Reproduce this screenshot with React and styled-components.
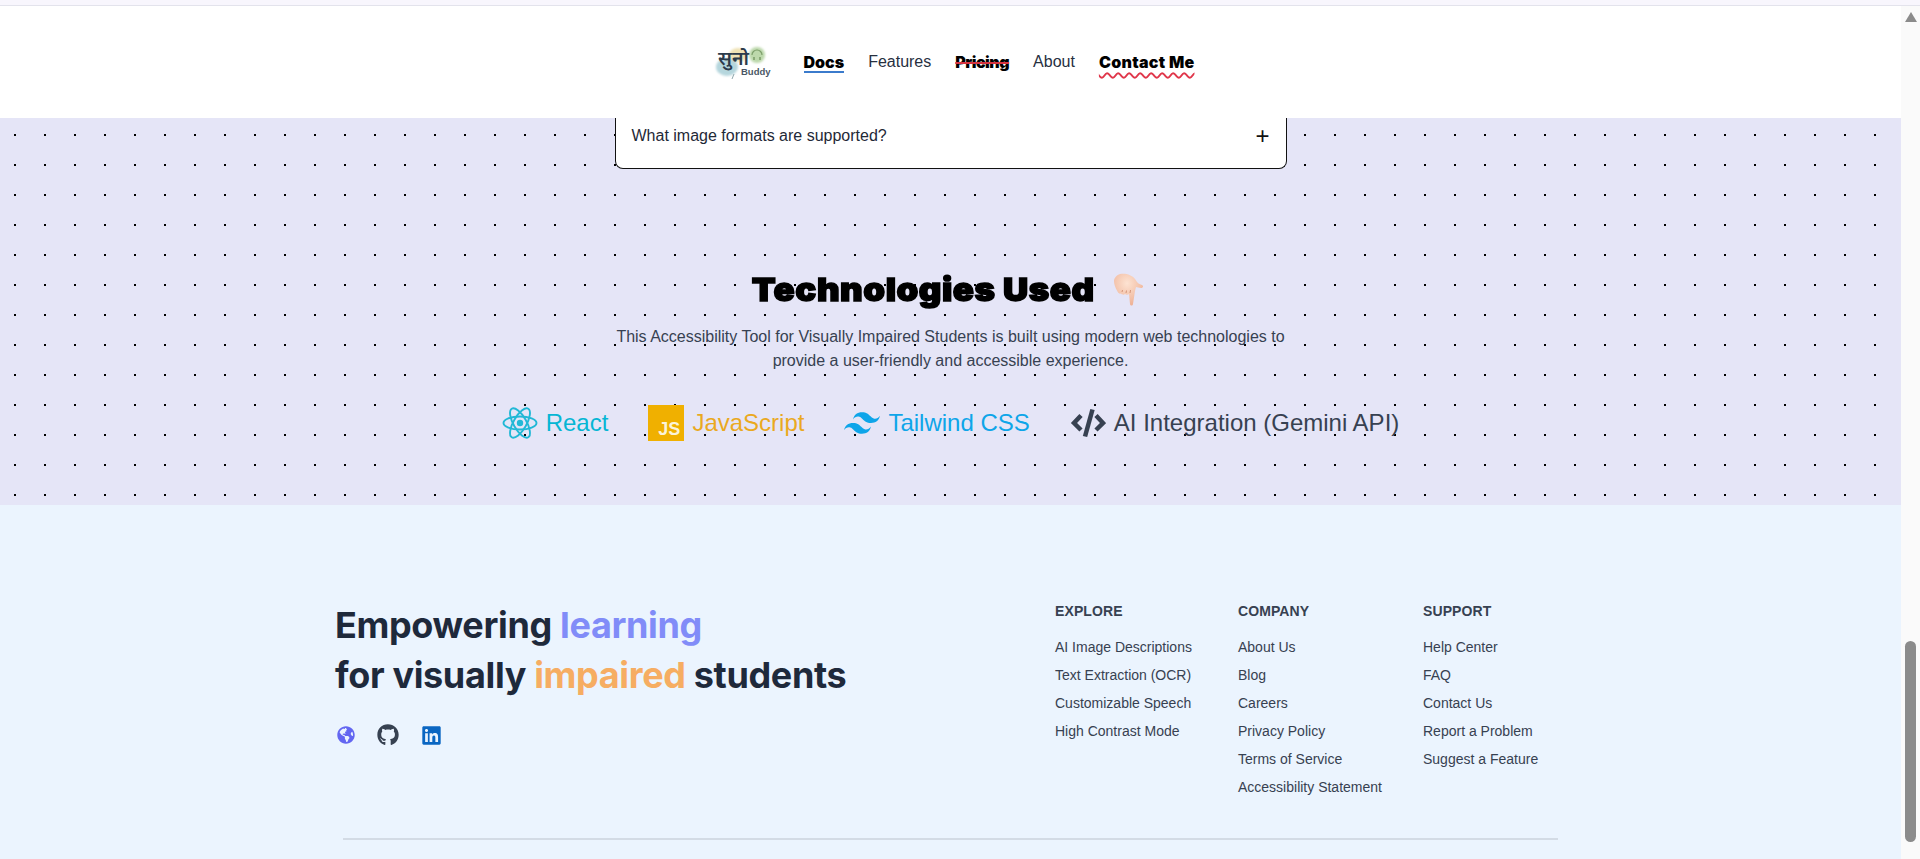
import React from "react";
import styled, { createGlobalStyle } from "styled-components";
import { FaGithub, FaGlobeAmericas, FaLinkedin } from "react-icons/fa";
import { SiTailwindcss } from "react-icons/si";

const Global = createGlobalStyle`
  html, body { margin: 0; padding: 0; height: 100%; overflow: hidden; background: #fff; }
  body { font-family: "Liberation Sans", Arial, sans-serif; color: #1f2937; }
  * { box-sizing: border-box; }
`;

const Page = styled.div`
  height: 859px;
  display: flex;
  flex-direction: column;
  overflow: hidden;
`;
const TopStrip = styled.div`
  height: 6px;
  flex: none;
  background: #f8f6fd;
  border-bottom: 1px solid #e3e3ec;
`;
const Viewport = styled.div`
  flex: 1;
  display: flex;
  min-height: 0;
`;
const Main = styled.main`
  flex: 1;
  min-width: 0;
  display: flex;
  flex-direction: column;
`;
const ScrollTrack = styled.div`
  width: 19px;
  flex: none;
  background: #fafafa;
  display: flex;
  flex-direction: column;
  padding: 6px 4px 0;
`;
const ScrollArrow = styled.div`
  width: 0;
  height: 0;
  border-left: 6px solid transparent;
  border-right: 6px solid transparent;
  border-bottom: 10px solid #8b8b8b;
`;
const ScrollThumb = styled.div`
  width: 11px;
  height: 201px;
  margin-top: 619px;
  border-radius: 6px;
  background: #8b8b8b;
`;

const Nav = styled.nav`
  height: 112px;
  flex: none;
  background: #fff;
  display: flex;
  align-items: center;
  justify-content: center;
`;
const Logo = styled.svg`
  width: 64px;
  height: 64px;
  margin-right: 33px;
  flex: none;
`;
const NavLinks = styled.div`
  display: flex;
  align-items: center;
  gap: 24px;
`;
const NavLink = styled.a`
  font-size: 16px;
  line-height: 24px;
  color: #27303f;
  font-family: ${(p) => (p.$bold ? '"Inter", sans-serif' : '"Liberation Sans", sans-serif')};
  font-weight: ${(p) => (p.$bold ? 900 : 400)};
  ${(p) => p.$bold && "color: #000;"}
  ${(p) => p.$docs && "background: linear-gradient(#3b7bcc, #3b7bcc) 0 21px / 100% 2px no-repeat;"}
  ${(p) => p.$strike && "text-decoration: line-through; text-decoration-color: #d6333f; text-decoration-thickness: 1.5px; letter-spacing: -0.5px;"}
  ${(p) => p.$wavy && "text-decoration: underline wavy #e0364a; text-decoration-thickness: 1.5px; text-underline-offset: 4px; letter-spacing: 0.3px;"}
`;

const TechSection = styled.section`
  height: 387px;
  flex: none;
  background-color: #e5e5f7;
  background-image: radial-gradient(circle at 15px 15px, #000 1.1px, transparent 1.2px);
  background-size: 30px 30px;
  background-position: 0 -118px;
  display: flex;
  flex-direction: column;
  align-items: center;
`;
const FaqCard = styled.div`
  width: 672px;
  height: 51px;
  flex: none;
  background: #fff;
  border: 1px solid #111;
  border-top: none;
  border-radius: 0 0 8px 8px;
  display: flex;
  align-items: center;
  justify-content: space-between;
  padding: 0 16px 14px 16px;
  font-size: 16px;
  color: #1f2937;
`;
const Plus = styled.span`
  font-size: 24px;
  line-height: 22px;
  color: #111;
`;
const TechTitleRow = styled.div`
  display: flex;
  align-items: center;
  gap: 19px;
  margin-top: 99px;
  height: 44px;
`;
const TechTitle = styled.h2`
  margin: 0 14px;
  font-family: "Inter", sans-serif;
  font-weight: 900;
  font-size: 32px;
  line-height: 44px;
  color: #000;
  -webkit-text-stroke: 1.5px #000;
  letter-spacing: 0.5px;
  white-space: nowrap;
  transform: scaleX(1.09);
`;
const Hand = styled.svg`
  width: 30px;
  height: 34px;
  margin-right: 5px;
  flex: none;
`;
const TechText = styled.p`
  margin: 13px 0 0;
  width: 680px;
  text-align: center;
  font-size: 16px;
  line-height: 24px;
  color: #374151;
`;
const TechRow = styled.div`
  display: flex;
  align-items: center;
  gap: 40px;
  margin-top: 32px;
`;
const TechItem = styled.div`
  display: flex;
  align-items: center;
  gap: ${(p) => p.$gap || 10}px;
  font-size: 24px;
  line-height: 36px;
  color: ${(p) => p.$color};
`;
const TechIcon = styled.svg`
  width: 36px;
  height: 36px;
  flex: none;
`;
const JsBox = styled.span`
  width: 36px;
  height: 36px;
  background: #f0b000;
  color: #fbf3d9;
  font-size: 18px;
  font-weight: 700;
  display: flex;
  align-items: flex-end;
  justify-content: flex-end;
  padding: 0 4px 0 0;
  line-height: 23px;
`;

const Footer = styled.footer`
  flex: 1;
  background: #ebf4fe;
  padding: 0 335px;
`;
const FooterTop = styled.div`
  display: flex;
  justify-content: space-between;
  padding-top: 96px;
  height: 333px;
`;
const Brand = styled.div`
  display: flex;
  flex-direction: column;
  margin-top: -1px;
`;
const BrandTitle = styled.h3`
  margin: 0;
  font-family: "Inter", sans-serif;
  font-weight: 700;
  font-size: 36px;
  line-height: 50px;
  letter-spacing: -0.35px;
  color: #1e293b;
`;
const Accent = styled.span`
  color: ${(p) => p.$color};
`;
const Socials = styled.div`
  display: flex;
  align-items: center;
  gap: 22px;
  margin-top: 24px;
  padding-left: 2px;
`;
const Columns = styled.div`
  display: grid;
  grid-template-columns: 183px 185px 143px;
`;
const Column = styled.div`
  display: flex;
  flex-direction: column;
`;
const ColumnTitle = styled.h4`
  margin: 0 0 12px;
  font-size: 14px;
  line-height: 20px;
  font-weight: 700;
  letter-spacing: 0.1px;
  color: #374151;
`;
const ColumnLink = styled.a`
  font-size: 14px;
  line-height: 28px;
  color: #374151;
  white-space: nowrap;
`;
const Rule = styled.hr`
  margin: 0 8px;
  border: none;
  height: 2px;
  background: #d3dbe5;
`;

const columns = [
  ["EXPLORE", ["AI Image Descriptions", "Text Extraction (OCR)", "Customizable Speech", "High Contrast Mode"]],
  ["COMPANY", ["About Us", "Blog", "Careers", "Privacy Policy", "Terms of Service", "Accessibility Statement"]],
  ["SUPPORT", ["Help Center", "FAQ", "Contact Us", "Report a Problem", "Suggest a Feature"]],
];

export default function App() {
  return (
    <Page>
      <Global />
      <TopStrip />
      <Viewport>
        <Main>
          <Nav>
            <Logo viewBox="0 0 64 64" aria-label="Suno Buddy logo">
              <defs>
                <filter id="soft"><feGaussianBlur stdDeviation="0.8" /></filter>
              </defs>
              <g filter="url(#soft)">
                <ellipse cx="31" cy="25" rx="9" ry="7" fill="#efe2b4" />
                <circle cx="50" cy="25" r="8" fill="#bcd8ab" />
                <ellipse cx="20" cy="37" rx="11" ry="9" fill="#b5d6dd" />
              </g>
              <path d="M45 25a5 5 0 0 1 10 0" fill="none" stroke="#7d9f6b" strokeWidth="1.2" />
              <path d="M47 30v-3M53 30v-3" stroke="#7d9f6b" strokeWidth="1.6" />
              <path d="M27 44l-2 5" stroke="#8fa7ad" strokeWidth="1" />
              <text x="11" y="35" fontSize="19.500" fontWeight="600" fill="#2c3b4b" fontFamily="'Noto Sans', 'Liberation Sans', sans-serif">सुनो</text>
              <text x="34" y="45" fontSize="9.500" fontWeight="700" fill="#4a5765" fontFamily="'Liberation Sans', sans-serif">Buddy</text>
            </Logo>
            <NavLinks>
              <NavLink $bold $docs>Docs</NavLink>
              <NavLink>Features</NavLink>
              <NavLink $bold $strike>Pricing</NavLink>
              <NavLink>About</NavLink>
              <NavLink $bold $wavy>Contact Me</NavLink>
            </NavLinks>
          </Nav>
          <TechSection>
            <FaqCard>
              <span>What image formats are supported?</span>
              <Plus>+</Plus>
            </FaqCard>
            <TechTitleRow>
              <TechTitle>Technologies Used</TechTitle>
              <Hand viewBox="0 0 30 34">
                <defs>
                  <radialGradient id="skin" cx="45%" cy="30%" r="70%">
                    <stop offset="0%" stopColor="#fde3d2" />
                    <stop offset="100%" stopColor="#eeb195" />
                  </radialGradient>
                </defs>
                <path d="M6 1c6-1 12 1 15 5 2 3 3 5 7 6 2 1 1 3-1 3-2 0-4-1-5-1l-1 4-2 13c-.3 2-2.6 2-3 0l-1-10c-1 1-3 1-4 0-1 1-3 1-4-.5-1.500.5-3-.5-3.500-2C1 14 0 11 0 8c0-3 3-6 6-7z" fill="url(#skin)" />
                <path d="M8 19l.5-2M12 20l.5-2.500M16 20l.5-3" stroke="#d08d70" strokeWidth="0.9" fill="none" />
              </Hand>
            </TechTitleRow>
            <TechText>
              This Accessibility Tool for Visually Impaired Students is built using modern web technologies to provide a user-friendly and accessible experience.
            </TechText>
            <TechRow>
              <TechItem $color="#06b6d4" $gap={8}>
                <TechIcon viewBox="0 0 36 36" fill="none" stroke="#22b8d6" strokeWidth="1.9">
                  <ellipse cx="18" cy="18" rx="16.500" ry="6.500" />
                  <ellipse cx="18" cy="18" rx="16.500" ry="6.500" transform="rotate(60 18 18)" />
                  <ellipse cx="18" cy="18" rx="16.500" ry="6.500" transform="rotate(120 18 18)" />
                  <circle cx="18" cy="18" r="3.200" fill="#22b8d6" stroke="none" />
                </TechIcon>
                React
              </TechItem>
              <TechItem $color="#eaa91f" $gap={8}><JsBox>JS</JsBox>JavaScript</TechItem>
              <TechItem $color="#0ea5e9" $gap={8}><SiTailwindcss size={36} />Tailwind CSS</TechItem>
              <TechItem $color="#374151" $gap={8}>
                <TechIcon viewBox="0 0 36 36" fill="none" stroke="#374151" strokeWidth="4.500" strokeLinejoin="miter">
                  <path d="M11 10.500L4 18l7 7" />
                  <path d="M26 10.500L33 18l-7 7" />
                  <path d="M22.500 4.500L15 31.500" />
                </TechIcon>
                AI Integration (Gemini API)
              </TechItem>
            </TechRow>
          </TechSection>
          <Footer>
            <FooterTop>
              <Brand>
                <BrandTitle>Empowering <Accent $color="#818cf8">learning</Accent></BrandTitle>
                <BrandTitle>for visually <Accent $color="#f6ad62">impaired</Accent> students</BrandTitle>
                <Socials>
                  <FaGlobeAmericas size={18} color="#6366f1" />
                  <FaGithub size={22} color="#374151" />
                  <FaLinkedin size={21} color="#0a66c2" />
                </Socials>
              </Brand>
              <Columns>
                {columns.map(([title, links]) => (
                  <Column key={title}>
                    <ColumnTitle>{title}</ColumnTitle>
                    {links.map((l) => <ColumnLink key={l}>{l}</ColumnLink>)}
                  </Column>
                ))}
              </Columns>
            </FooterTop>
            <Rule />
          </Footer>
        </Main>
        <ScrollTrack>
          <ScrollArrow />
          <ScrollThumb />
        </ScrollTrack>
      </Viewport>
    </Page>
  );
}
